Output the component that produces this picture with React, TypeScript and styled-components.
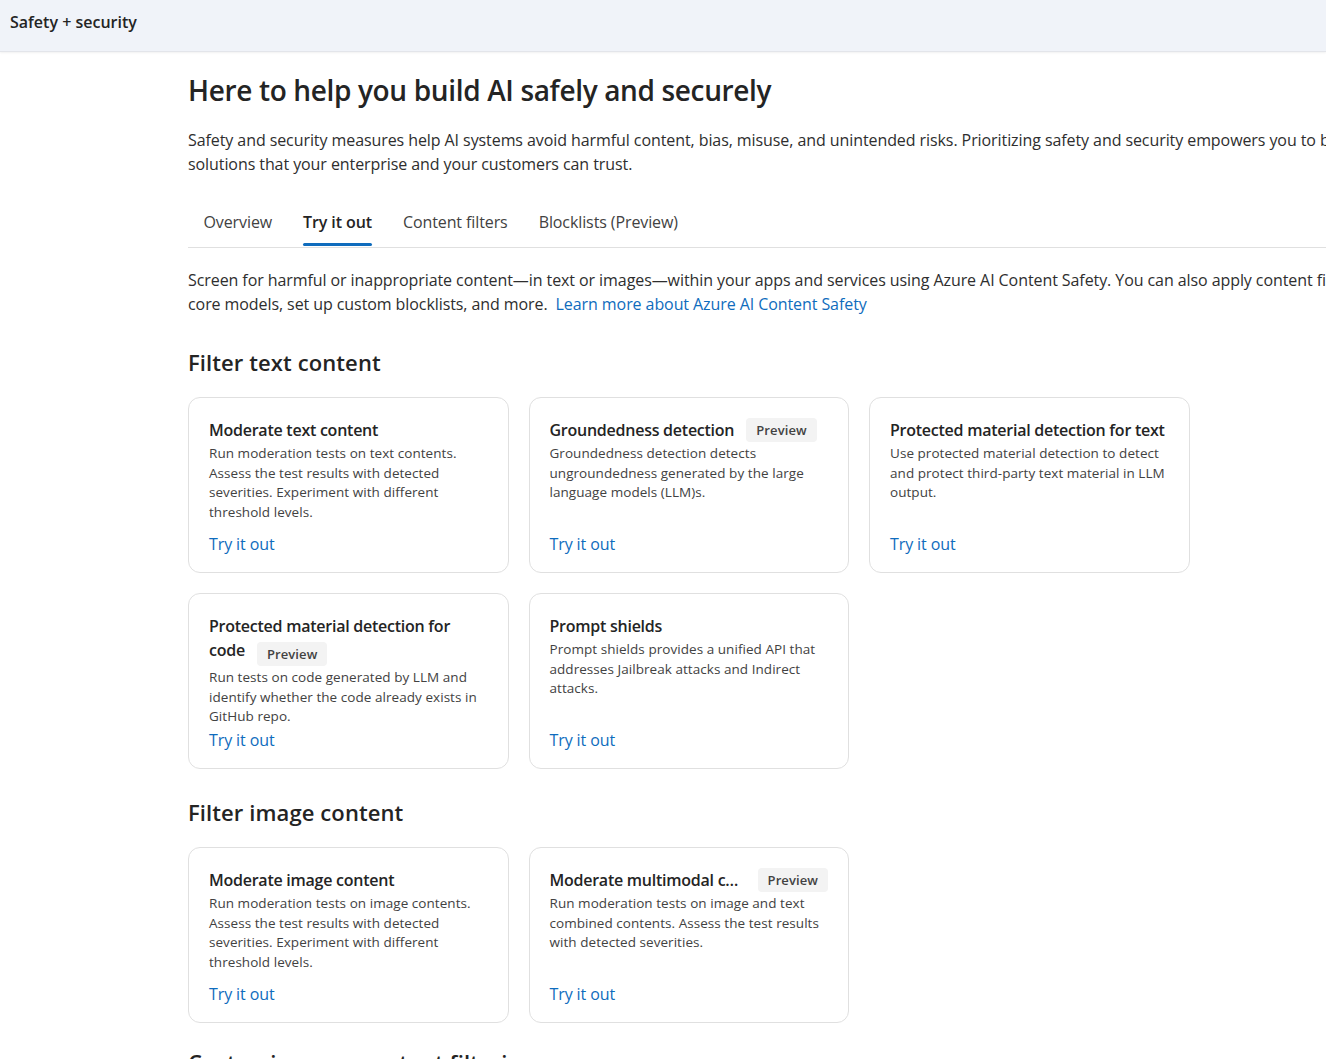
import React from "react";
import styled, { createGlobalStyle } from "styled-components";

const GlobalStyle = createGlobalStyle`
  html, body {
    margin: 0;
    padding: 0;
    overflow-x: hidden;
    background: #ffffff;
  }
  body {
    font-family: "Open Sans", "Noto Sans", "Liberation Sans", sans-serif;
    color: #242424;
    -webkit-font-smoothing: antialiased;
  }
  * { box-sizing: border-box; }
`;

const Page = styled.div`
  display: flex;
  flex-direction: column;
  min-height: 100vh;
`;

const TopBar = styled.header`
  height: 52px;
  display: flex;
  align-items: flex-start;
  padding: 11px 10px 0;
  background: #f0f3f9;
  border-bottom: 1px solid #e3e5ea;
  box-shadow: 0 1px 2px rgba(0, 0, 0, 0.06);
`;

const BarTitle = styled.h1`
  margin: 0;
  font-size: 16px;
  line-height: 22px;
  font-weight: 600;
  letter-spacing: 0;
  color: #242424;
`;

const Main = styled.main`
  width: 1500px;
  padding: 20px 0 40px 188px;
  display: flex;
  flex-direction: column;
`;

const Title = styled.h2`
  margin: 0;
  font-size: 28px;
  line-height: 36px;
  font-weight: 600;
  letter-spacing: -0.35px;
  color: #242424;
`;

const Lead = styled.p<{ $top: number }>`
  margin: ${(p) => p.$top}px 0 0;
  font-size: 16px;
  line-height: 24px;
  letter-spacing: -0.08px;
  color: #2e2e2e;
  white-space: nowrap;
`;

const InlineLink = styled.a`
  color: #0f6cbd;
  text-decoration: none;
  margin-left: 8px;
`;

const TabList = styled.nav`
  margin-top: 24px;
  display: flex;
  align-items: stretch;
  border-bottom: 1px solid #e0e0e0;
`;

const Tab = styled.button<{ $active?: boolean }>`
  position: relative;
  height: 47px;
  padding: 0 15.5px 3px;
  border: none;
  background: transparent;
  font-family: inherit;
  font-size: 16px;
  letter-spacing: -0.1px;
  font-weight: ${(p) => (p.$active ? 600 : 400)};
  color: ${(p) => (p.$active ? "#242424" : "#424242")};
  cursor: pointer;

  &::after {
    content: "";
    position: absolute;
    left: 15.5px;
    right: 15.5px;
    bottom: 1px;
    height: 3px;
    border-radius: 2px;
    background: ${(p) => (p.$active ? "#0f6cbd" : "transparent")};
  }
`;

const Section = styled.section<{ $top: number }>`
  margin-top: ${(p) => p.$top}px;
  display: flex;
  flex-direction: column;
`;

const SectionTitle = styled.h3`
  margin: 0 0 21px;
  font-size: 22px;
  line-height: 28px;
  font-weight: 600;
  letter-spacing: 0.1px;
  color: #242424;
`;

const CardGrid = styled.div`
  display: grid;
  grid-template-columns: repeat(3, 320.5px);
  gap: 20px;
`;

const Card = styled.article`
  height: 176px;
  display: flex;
  flex-direction: column;
  padding: 20px 20px 16px;
  border: 1px solid #e0e0e0;
  border-radius: 12px;
  background: #ffffff;
`;

const CardTitle = styled.h4`
  margin: 0;
  font-size: 16px;
  line-height: 24px;
  font-weight: 600;
  letter-spacing: -0.25px;
  color: #242424;
`;

const TitleRow = styled.div`
  display: flex;
  align-items: center;
  min-width: 0;
`;

const TruncTitle = styled(CardTitle)`
  min-width: 0;
  white-space: nowrap;
  overflow: hidden;
  text-overflow: ellipsis;
`;

const Badge = styled.span`
  display: inline-flex;
  align-items: center;
  flex-shrink: 0;
  height: 24px;
  margin-left: 12px;
  padding: 0 10px;
  border-radius: 4px;
  background: #f3f3f3;
  font-size: 13px;
  font-weight: 600;
  letter-spacing: 0.1px;
  color: #424242;
  vertical-align: -3px;
`;

const Desc = styled.p`
  margin: 2px 0 0;
  font-size: 13.5px;
  line-height: 19.5px;
  letter-spacing: 0.05px;
  color: #424242;
`;

const TryLink = styled.a`
  margin-top: auto;
  padding-top: 1px;
  font-size: 16px;
  line-height: 24px;
  letter-spacing: -0.1px;
  color: #0f6cbd;
  text-decoration: none;
  cursor: pointer;
`;

type CardData = {
  title: string;
  desc: string;
  preview?: boolean;
  truncate?: boolean;
};

const textCards: CardData[] = [
  {
    title: "Moderate text content",
    desc: "Run moderation tests on text contents. Assess the test results with detected severities. Experiment with different threshold levels.",
  },
  {
    title: "Groundedness detection",
    desc: "Groundedness detection detects ungroundedness generated by the large language models (LLM)s.",
    preview: true,
    truncate: true,
  },
  {
    title: "Protected material detection for text",
    desc: "Use protected material detection to detect and protect third-party text material in LLM output.",
  },
  {
    title: "Protected material detection for code",
    desc: "Run tests on code generated by LLM and identify whether the code already exists in GitHub repo.",
    preview: true,
  },
  {
    title: "Prompt shields",
    desc: "Prompt shields provides a unified API that addresses Jailbreak attacks and Indirect attacks.",
  },
];

const imageCards: CardData[] = [
  {
    title: "Moderate image content",
    desc: "Run moderation tests on image contents. Assess the test results with detected severities. Experiment with different threshold levels.",
  },
  {
    title: "Moderate multimodal content",
    desc: "Run moderation tests on image and text combined contents. Assess the test results with detected severities.",
    preview: true,
    truncate: true,
  },
];

function FeatureCard({ title, desc, preview, truncate }: CardData) {
  return (
    <Card>
      {truncate ? (
        <TitleRow>
          <TruncTitle title={title}>{title}</TruncTitle>
          {preview && <Badge>Preview</Badge>}
        </TitleRow>
      ) : (
        <CardTitle>
          {title}
          {preview && <Badge>Preview</Badge>}
        </CardTitle>
      )}
      <Desc>{desc}</Desc>
      <TryLink>Try it out</TryLink>
    </Card>
  );
}

export default function App() {
  return (
    <>
      <GlobalStyle />
      <Page>
        <TopBar>
          <BarTitle>Safety + security</BarTitle>
        </TopBar>
        <Main>
          <Title>Here to help you build AI safely and securely</Title>
          <Lead $top={20}>
            Safety and security measures help AI systems avoid harmful content, bias, misuse, and unintended risks.
            Prioritizing safety and security empowers you to build AI
            <br />
            solutions that your enterprise and your customers can trust.
          </Lead>
          <TabList role="tablist">
            <Tab role="tab">Overview</Tab>
            <Tab role="tab" $active aria-selected>
              Try it out
            </Tab>
            <Tab role="tab">Content filters</Tab>
            <Tab role="tab">Blocklists (Preview)</Tab>
          </TabList>
          <Lead $top={20}>
            Screen for harmful or inappropriate content—in text or images—within your apps and services using Azure AI
            Content Safety. You can also apply content filters to
            <br />
            core models, set up custom blocklists, and more.
            <InlineLink>Learn more about Azure AI Content Safety</InlineLink>
          </Lead>
          <Section $top={32}>
            <SectionTitle>Filter text content</SectionTitle>
            <CardGrid>
              {textCards.map((c) => (
                <FeatureCard key={c.title} {...c} />
              ))}
            </CardGrid>
          </Section>
          <Section $top={29}>
            <SectionTitle>Filter image content</SectionTitle>
            <CardGrid>
              {imageCards.map((c) => (
                <FeatureCard key={c.title} {...c} />
              ))}
            </CardGrid>
          </Section>
          <Section $top={25}>
            <SectionTitle>Customize your content filtering</SectionTitle>
          </Section>
        </Main>
      </Page>
    </>
  );
}
